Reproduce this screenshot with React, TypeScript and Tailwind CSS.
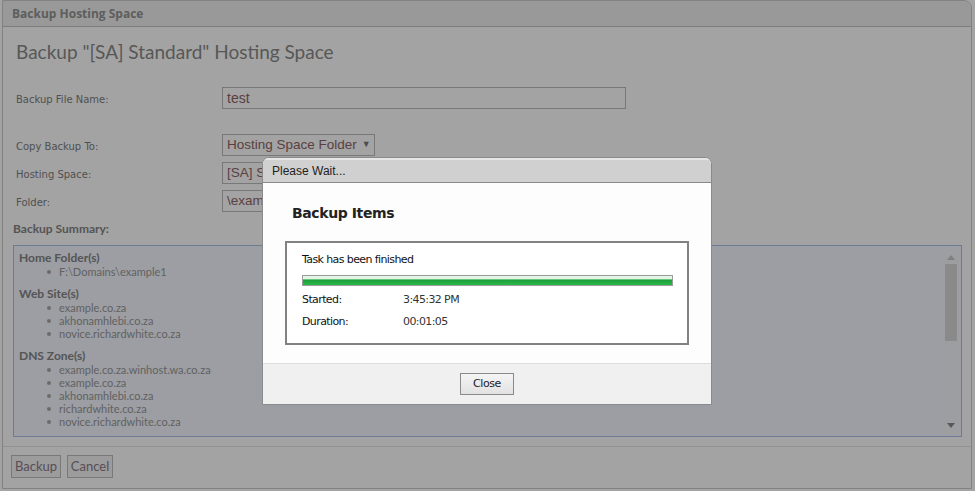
import React from 'react'

// 备份主机空间页面 + "Please Wait..." 模态框

const homeFolders = ['F:\\Domains\\example1']
const webSites = ['example.co.za', 'akhonamhlebi.co.za', 'novice.richardwhite.co.za']
const dnsZones = [
  'example.co.za.winhost.wa.co.za',
  'example.co.za',
  'akhonamhlebi.co.za',
  'richardwhite.co.za',
  'novice.richardwhite.co.za',
]

function SummaryGroup({ title, items }: { title: string; items: string[] }) {
  return (
    <div className="mb-[9px]">
      <div className="font-bold text-[12px] leading-[13px] text-[#858585]">{title}</div>
      <ul className="mt-[1px]">
        {items.map((it) => (
          <li key={it} className="flex items-center h-[13px] leading-[13px] text-[11px] text-[#999999]">
            <span className="w-[4px] h-[4px] rounded-full bg-[#a8a8a8] ml-[28px] mr-[8px]" />
            {it}
          </li>
        ))}
      </ul>
    </div>
  )
}

function FormRow({ label, children }: { label: string; children: React.ReactNode }) {
  return (
    <div className="flex items-center h-[22px]">
      <div className="w-[206px] pt-[3px] text-[10px] text-[#7e7e7e] font-['DejaVu_Sans',sans-serif]">
        {label}
      </div>
      {children}
    </div>
  )
}

const boxCls =
  "h-[22px] border border-[#bcbcbc] flex items-center px-[4px] text-[13.5px] text-[#8e6666] font-['Liberation_Sans',sans-serif] whitespace-nowrap overflow-hidden"

export default function App() {
  return (
    <div className="relative w-[975px] h-[491px] overflow-hidden bg-white font-['Lato',sans-serif]">
      {/* 底层页面 */}
      <div className="flex flex-col h-[489px] ml-[2px] w-[970px] border border-[#cccccc] rounded-tr-[8px] bg-white">
        <div className="h-[26px] shrink-0 flex items-center px-[9px] bg-[#f0f0f0] border-b border-[#c4c4c4] rounded-tr-[8px]">
          <span className="text-[12px] font-bold text-[#939393] font-['Open_Sans',sans-serif]">Backup Hosting Space</span>
        </div>

        <div className="flex-1 flex flex-col px-[10px]">
          <h1 className="mt-[11px] ml-[3px] text-[19px] leading-[28px] text-[#8a8a8a]">
            Backup "[SA] Standard" Hosting Space
          </h1>

          <div className="mt-[21px] ml-[3px]">
            <FormRow label="Backup File Name:">
              <div className={`${boxCls} w-[404px] text-[14px]`}>test</div>
            </FormRow>
          </div>

          <div className="mt-[25px] ml-[3px] flex flex-col gap-[6px]">
            <FormRow label="Copy Backup To:">
              <div className={`${boxCls} w-[153px]`}>
                Hosting Space Folder
                <span className="ml-[5px] text-[9px] text-[#777]">▼</span>
              </div>
            </FormRow>
            <FormRow label="Hosting Space:">
              <div className={`${boxCls} w-[153px]`}>[SA] Standard</div>
            </FormRow>
            <FormRow label="Folder:">
              <div className={`${boxCls} w-[200px]`}>\example1</div>
            </FormRow>
          </div>

          <div className="mt-[8px] text-[12px] font-bold text-[#858585]">Backup Summary:</div>

          <div className="mt-[7px] h-[192px] w-[949px] border border-[#aac3e8] bg-[#f4f7ff] flex">
            <div className="flex-1 pl-[5px] pt-[5px] overflow-hidden">
              <SummaryGroup title="Home Folder(s)" items={homeFolders} />
              <SummaryGroup title="Web Site(s)" items={webSites} />
              <SummaryGroup title="DNS Zone(s)" items={dnsZones} />
            </div>
            {/* 滚动条 */}
            <div className="w-[14px] mr-[3px] my-[2px] bg-[#f6f7f9] flex flex-col items-center">
              <svg width="8" height="5" viewBox="0 0 8 5" className="mt-[7px]">
                <path d="M0 5 L4 0 L8 5 Z" fill="#c8c8c8" />
              </svg>
              <div className="mt-[4px] w-[12px] h-[77px] bg-[#d8d8d8]" />
              <div className="flex-1" />
              <svg width="8" height="5" viewBox="0 0 8 5" className="mb-[6px]">
                <path d="M0 0 L8 0 L4 5 Z" fill="#8a8a8a" />
              </svg>
            </div>
          </div>
        </div>

        <div className="h-[42px] shrink-0 border-t border-[#e4e4e4] flex items-center gap-[6px] px-[8px] pb-[2px]">
          <button className="h-[23px] w-[50px] border border-[#bdbdbd] bg-[#f4f4f4] text-[13px] text-[#8a7a8a]">
            Backup
          </button>
          <button className="h-[23px] w-[46px] border border-[#bdbdbd] bg-[#f4f4f4] text-[13px] text-[#8a7a8a]">
            Cancel
          </button>
        </div>
      </div>

      {/* 遮罩 */}
      <div className="absolute inset-0 bg-black/[0.36]" />

      {/* 模态框 */}
      <div className="absolute left-[262px] top-[157px] w-[450px] h-[248px] border border-[#8a8a8a] rounded-t-[7px] bg-white flex flex-col overflow-hidden">
        <div className="h-[25px] shrink-0 bg-[#d0d0d0] border-t-[2px] border-t-[#e6e6e6] border-b border-b-[#8a8a8a] flex items-center px-[9px] pb-[1px]">
          <span className="text-[12px] text-[#222] font-['Liberation_Sans',sans-serif]">Please Wait...</span>
        </div>
        <div className="flex-1 bg-[#fdfdfd] pl-[22px] pr-[22px]">
          <div className="mt-[20px] ml-[7px] text-[14px] font-bold text-[#222] font-['DejaVu_Sans',sans-serif] tracking-[-0.4px] leading-[20px]">
            Backup Items
          </div>
          <div className="mt-[18px] h-[104px] border-2 border-[#828282] bg-white pl-[15px] pr-[14px] font-['DejaVu_Sans',sans-serif] text-[11px] text-[#111] tracking-[-0.6px]">
            <div className="mt-[10px] h-[14px] leading-[14px]">Task has been finished</div>
            <div className="mt-[8px] h-[11px] border border-[#9c9c9c] flex flex-col">
              <div className="h-[3px] bg-[#e4f5e6]" />
              <div className="h-[1px] bg-[#66c77a]" />
              <div className="flex-1 bg-gradient-to-b from-[#1f9e3a] to-[#2bb84a]" />
            </div>
            <div className="mt-[7px] flex h-[14px] leading-[14px]">
              <span className="w-[101px]">Started:</span>
              <span className="text-[#333]">3:45:32 PM</span>
            </div>
            <div className="mt-[8px] flex h-[14px] leading-[14px]">
              <span className="w-[101px]">Duration:</span>
              <span className="text-[#333]">00:01:05</span>
            </div>
          </div>
        </div>
        <div className="h-[41px] shrink-0 bg-[#f0f0f0] border-t border-[#dddddd] flex items-center justify-center">
          <button className="w-[54px] h-[22px] border border-[#8a8a8a] bg-gradient-to-b from-[#f4f4f4] to-[#e2e2e2] text-[11px] text-[#222] font-['DejaVu_Sans',sans-serif] tracking-[-0.4px]">
            Close
          </button>
        </div>
      </div>
    </div>
  )
}
